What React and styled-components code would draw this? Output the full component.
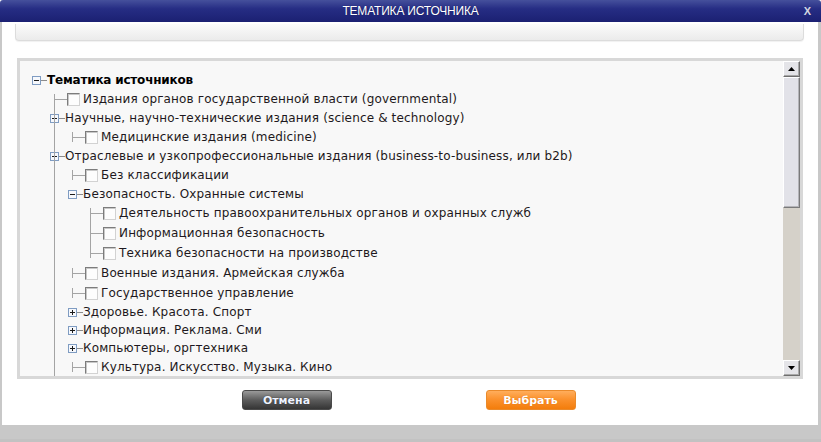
import React from "react";
import styled, { createGlobalStyle } from "styled-components";

const TREE = {
	label: "Тематика источников",
	bold: true,
	children: [
		{ label: "Издания органов государственной власти (governmental)" },
		{
			label: "Научные, научно-технические издания (science & technology)",
			children: [{ label: "Медицинские издания (medicine)" }]
		},
		{
			label: "Отраслевые и узкопрофессиональные издания (business-to-business, или b2b)",
			children: [
				{ label: "Без классификации" },
				{
					label: "Безопасность. Охранные системы",
					line: true,
					children: [
						{ label: "Деятельность правоохранительных органов и охранных служб" },
						{ label: "Информационная безопасность" },
						{ label: "Техника безопасности на производстве" }
					]
				},
				{ label: "Военные издания. Армейская служба" },
				{ label: "Государственное управление" },
				{ label: "Здоровье. Красота. Спорт", closed: true },
				{ label: "Информация. Реклама. Сми", closed: true },
				{ label: "Компьютеры, оргтехника", closed: true },
				{ label: "Культура. Искусство. Музыка. Кино" }
			]
		}
	]
};

const GlobalStyle = createGlobalStyle`
	html, body {
		margin: 0;
		padding: 0;
		background: #ffffff;
	}
	* {
		box-sizing: border-box;
	}
`;

const Dialog = styled.div`
	width: 821px;
	height: 442px;
	display: flex;
	flex-direction: column;
	background: #ffffff;
	overflow: hidden;
`;

const TitleBar = styled.div`
	height: 22px;
	flex: none;
	display: grid;
	grid-template-columns: 1fr auto 1fr;
	align-items: center;
	background: linear-gradient(#45509c 0%, #262d84 40%, #1b2072 100%);
	border-radius: 3px 3px 0 0;
	padding: 0 10px 0 10px;
`;

const Title = styled.div`
	grid-column: 2;
	font-family: "Liberation Sans", Arial, sans-serif;
	font-size: 12px;
	color: #ffffff;
	letter-spacing: -0.2px;
	text-shadow: 0 0 1px #0c1050;
`;

const Close = styled.div`
	grid-column: 3;
	justify-self: end;
	font-family: "Liberation Sans", Arial, sans-serif;
	font-weight: bold;
	font-size: 11px;
	color: #d4d6e0;
	cursor: pointer;
`;

const Body = styled.div`
	flex: 1;
	display: flex;
	flex-direction: column;
	border-left: 2px solid #c8c8c8;
	border-right: 3px solid #c8c8c8;
`;

const Toolbar = styled.div`
	height: 17px;
	margin: 2px 14px 0 13px;
	background: linear-gradient(#fbfbfb, #ebebeb);
	border: 1px solid #dcdcdc;
	border-top: none;
	border-radius: 0 0 4px 4px;
	box-shadow: 0 1px 1px rgba(0, 0, 0, 0.06);
`;

const TreeBox = styled.div`
	height: 321px;
	margin: 17px 15px 0 15px;
	border: 3px solid #d8d8d8;
	display: flex;
	background: #f8f8f8;
`;

const Viewport = styled.div`
	flex: 1;
	overflow: hidden;
	padding-top: 10px;
	font-family: "DejaVu Sans", Verdana, sans-serif;
	font-size: 12px;
	color: #1e1820;
`;

const Group = styled.div`
	position: relative;

	&::before {
		content: "";
		display: ${props => (props.$line ? "block" : "none")};
		position: absolute;
		left: ${props => 16 + props.$level * 18}px;
		top: 7px;
		bottom: ${props => (props.$open ? 0 : 9)}px;
		width: 1px;
		background: #a4a4a4;
	}
`;

const Row = styled.div`
	display: flex;
	align-items: center;
	height: ${props => (props.$leaf ? 20 : 18)}px;
	padding-left: ${props => 12 + props.$level * 18}px;
	white-space: nowrap;
`;

const Stub = styled.span`
	width: 6px;
	height: 1px;
	background: #8c8c8c;
	flex: none;
`;

const Connector = styled.span`
	flex: none;
	width: 13px;
	height: 10px;
	margin-left: 4px;
	border-left: 1px solid #a4a4a4;
	background: linear-gradient(#a4a4a4, #a4a4a4) no-repeat left center / 100% 1px;
`;

const Checkbox = styled.span`
	flex: none;
	width: 13px;
	height: 13px;
	border: 1px solid;
	border-color: #7c7c7c #d2d2d2 #d2d2d2 #7c7c7c;
	background: #fdfdfd;
	box-shadow: inset 1px 1px 0 #c8c8c8;
`;

const Label = styled.span`
	margin-left: ${props => (props.$leaf ? 3 : 0)}px;
	font-weight: ${props => (props.$bold ? "bold" : "normal")};
	letter-spacing: ${props => (props.$bold ? "-0.2px" : "0.15px")};
	color: ${props => (props.$bold ? "#000000" : "inherit")};
`;

const ScrollBar = styled.div`
	width: 17px;
	flex: none;
	display: flex;
	flex-direction: column;
	background: #d5d1c9;
`;

const ArrowButton = styled.div`
	height: 16px;
	flex: none;
	display: flex;
	align-items: center;
	justify-content: center;
	background: #e4e4e8;
	border: 1px solid;
	border-color: #ffffff #6e6e6e #6e6e6e #ffffff;
	box-shadow: inset -1px -1px 0 #a8a8a8;
`;

const Track = styled.div`
	flex: 1;
	display: flex;
	flex-direction: column;
`;

const Thumb = styled.div`
	height: 131px;
	background: #e2e2e8;
	border: 1px solid;
	border-color: #ffffff #7a7a7a #7a7a7a #ffffff;
	box-shadow: inset -1px -1px 0 #b4b4b8;
`;

const Buttons = styled.div`
	display: flex;
	justify-content: center;
	gap: 154px;
	margin-top: 11px;
	margin-left: -3px;
`;

const Button = styled.button`
	width: 90px;
	height: 20px;
	padding: 0;
	border-radius: 3px;
	font-family: "DejaVu Sans", Verdana, sans-serif;
	font-weight: bold;
	font-size: 11px;
	cursor: pointer;
	color: ${props => (props.$primary ? "#ffffff" : "#eef3ff")};
	border: 1px solid ${props => (props.$primary ? "#ea8a2a" : "#4a4a4a")};
	background: ${props =>
		props.$primary
			? "linear-gradient(#ffae5c 0%, #fb922e 45%, #f37d0c 100%)"
			: "linear-gradient(#9a9a9a 0%, #5c5c5c 50%, #353535 100%)"};
	text-shadow: 0 0 1px ${props => (props.$primary ? "#d86a00" : "#202020")};
`;

const Footer = styled.div`
	height: 17px;
	flex: none;
	background: #c8c8c8;
	border-bottom: 3px solid #c2c2c2;
`;

const Toggle = ({ closed }) => (
	<svg width="9" height="9" viewBox="0 0 9 9" style={{ flex: "none" }}>
		<rect x="0.5" y="0.5" width="8" height="8" fill="#f6f8fc" stroke="#7f9cc2" />
		<line x1="2" y1="4.5" x2="7" y2="4.5" stroke="#1a1a1a" />
		{closed && <line x1="4.5" y1="2" x2="4.5" y2="7" stroke="#1a1a1a" />}
	</svg>
);

const Arrow = ({ down }) => (
	<svg width="7" height="4" viewBox="0 0 7 4">
		<polygon points={down ? "0,0 7,0 3.5,4" : "0,4 7,4 3.5,0"} fill="#000000" />
	</svg>
);

const Node = ({ node, level }) => {
	const leaf = !node.children && !node.closed;
	return (
		<>
			<Row $leaf={leaf} $level={level}>
				{leaf ? (
					<>
						<Connector />
						<Checkbox />
					</>
				) : (
					<>
						<Toggle closed={node.closed} />
						<Stub />
					</>
				)}
				<Label $leaf={leaf} $bold={node.bold}>
					{node.label}
				</Label>
			</Row>
			{node.children && (
				<Group $line={node.line || level === 0} $open={level === 0} $level={level + 1}>
					{node.children.map(child => (
						<Node key={child.label} node={child} level={level + 1} />
					))}
				</Group>
			)}
		</>
	);
};

const App = () => (
	<>
		<GlobalStyle />
		<Dialog>
			<TitleBar>
				<Title>ТЕМАТИКА ИСТОЧНИКА</Title>
				<Close>X</Close>
			</TitleBar>
			<Body>
				<Toolbar />
				<TreeBox>
					<Viewport>
						<Node node={TREE} level={0} />
					</Viewport>
					<ScrollBar>
						<ArrowButton>
							<Arrow />
						</ArrowButton>
						<Track>
							<Thumb />
						</Track>
						<ArrowButton>
							<Arrow down />
						</ArrowButton>
					</ScrollBar>
				</TreeBox>
				<Buttons>
					<Button>Отмена</Button>
					<Button $primary>Выбрать</Button>
				</Buttons>
			</Body>
			<Footer />
		</Dialog>
	</>
);

export default App;
